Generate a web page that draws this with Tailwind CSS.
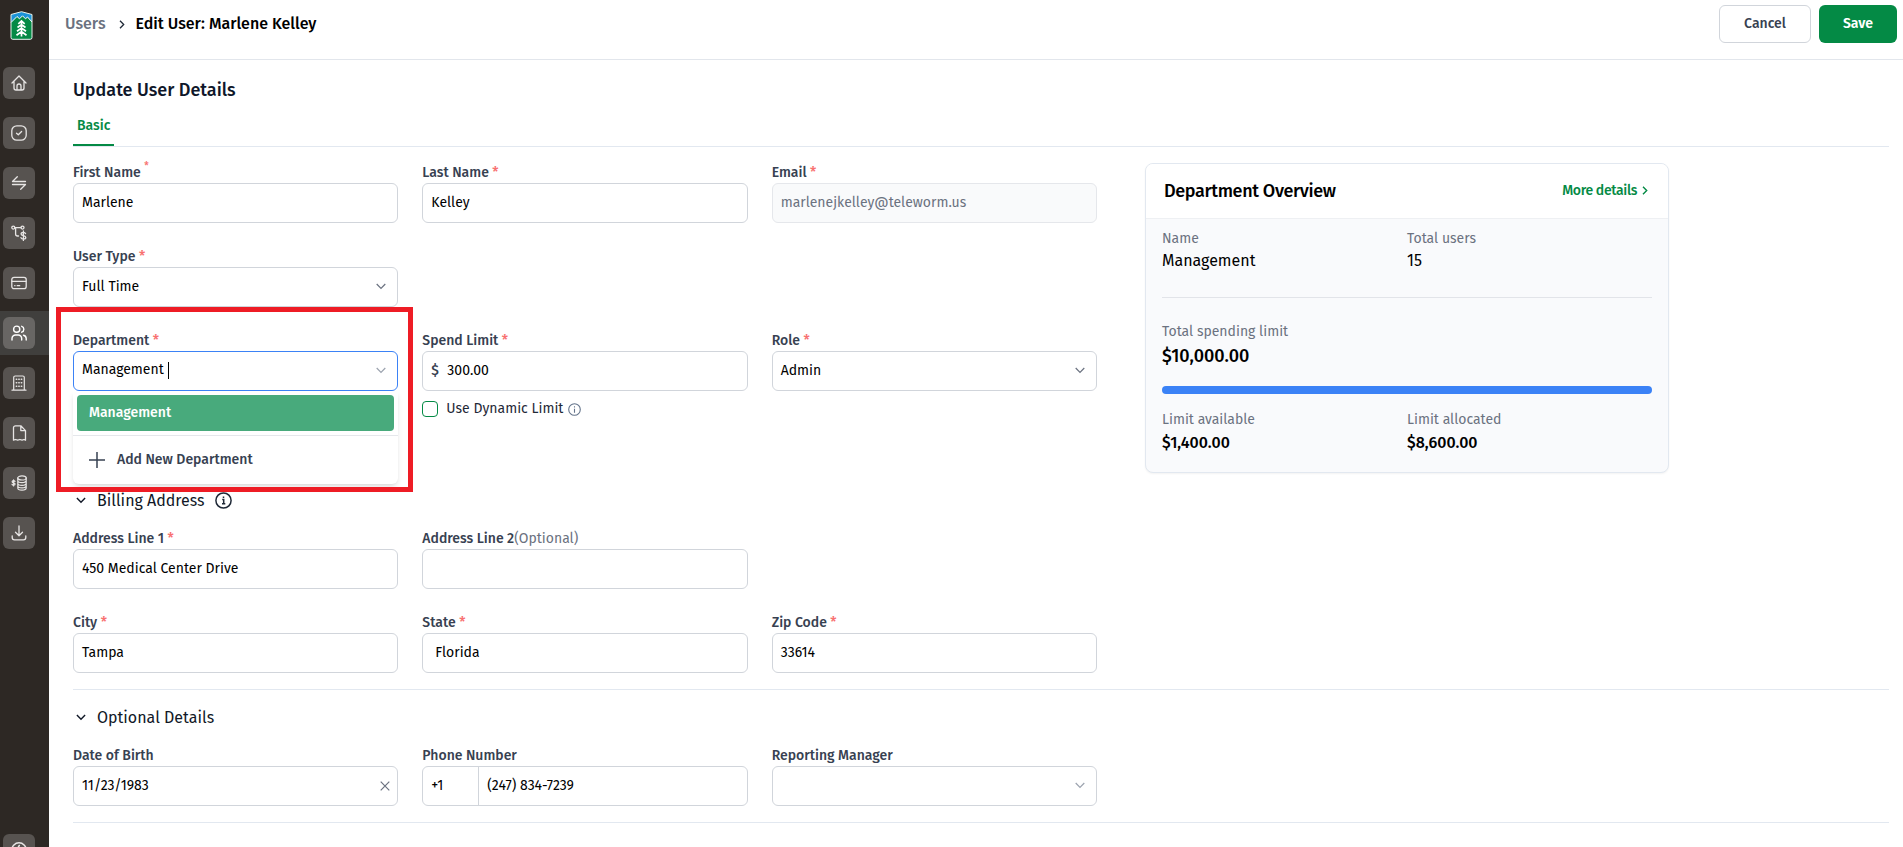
<!DOCTYPE html>
<html lang="en">
<head>
  <meta charset="UTF-8">
  <title>Edit User</title>
  <script src="https://cdn.jsdelivr.net/npm/@tailwindcss/browser@4"></script>
</head>
<body class="font-['Fira_Sans','Noto_Sans',sans-serif] bg-white text-black h-[847px] overflow-hidden flex text-sm">

  <!-- Sidebar -->
  <aside class="w-[49px] shrink-0 h-full bg-[#2d2824] text-[#e7e5e4] flex flex-col overflow-hidden">
    <div class="h-[61px] shrink-0 pl-[10px] pt-[11px]">
      <svg class="w-[23px] h-[29px]" viewBox="0 0 23 29">
        <path d="M1 3.500 11.500.7 22 3.500v23a1.800 1.800 0 0 1-1.800 1.800H2.800A1.800 1.800 0 0 1 1 26.500z" fill="#1b93d8"/>
        <path d="M1 11.500 7 5.500l2.500 2.300L12.500 4.800l3 3L17.500 6l4.500 5v15.500a1.800 1.800 0 0 1-1.800 1.800H2.800A1.800 1.800 0 0 1 1 26.500z" fill="#048a45"/>
        <path d="M1 11.500 7 5.500l2.500 2.300L12.500 4.800l3 3L17.500 6l4.500 5" fill="none" stroke="#fff" stroke-width="1"/>
        <path d="M1 3.500 11.500.7 22 3.500v23a1.800 1.800 0 0 1-1.800 1.800H2.800A1.800 1.800 0 0 1 1 26.500z" fill="none" stroke="#e8f3ec" stroke-width="1"/>
        <path d="M11.500 10.500v15M8.300 12.800l3.200-2.800 3.200 2.800M7.500 16.500l4-3 4 3M7 20.300l4.500-3.300 4.500 3.300M6.500 24.200l5-3.700 5 3.700" fill="none" stroke="#fff" stroke-width="1.700"/>
      </svg>
    </div>
    <nav class="flex flex-col">
      <a class="h-[44px] mb-[6px] pl-[3px] flex items-center"><span class="w-8 h-8 rounded-md bg-[#575350] flex items-center justify-center">
        <svg class="w-4 h-4" viewBox="0 0 16 16" fill="none" stroke="currentColor" stroke-width="1.300" stroke-linejoin="round" stroke-linecap="round"><path d="M1 8 8 1l7 7M3 6.500V13a2 2 0 0 0 2 2h6a2 2 0 0 0 2-2V6.500M6 15v-4a2 2 0 0 1 4 0v4"/></svg>
      </span></a>
      <a class="h-[44px] mb-[6px] pl-[3px] flex items-center"><span class="w-8 h-8 rounded-md bg-[#575350] flex items-center justify-center">
        <svg class="w-4 h-4" viewBox="0 0 16 16" fill="none" stroke="currentColor" stroke-width="1.300" stroke-linejoin="round" stroke-linecap="round"><rect x=".8" y=".8" width="14.400" height="14.400" rx="5"/><path d="m5.500 8.200 1.800 1.600 3.300-3.300"/></svg>
      </span></a>
      <a class="h-[44px] mb-[6px] pl-[3px] flex items-center"><span class="w-8 h-8 rounded-md bg-[#575350] flex items-center justify-center">
        <svg class="w-4 h-4" viewBox="0 0 16 16" fill="none" stroke="currentColor" stroke-width="1.300" stroke-linejoin="round" stroke-linecap="round"><path d="M14.500 6.500h-13L6.300 1.800M1.500 9.500h13L9.700 14.200"/></svg>
      </span></a>
      <a class="h-[44px] mb-[6px] pl-[3px] flex items-center"><span class="w-8 h-8 rounded-md bg-[#575350] flex items-center justify-center">
        <svg class="w-4 h-4" viewBox="0 0 16 16" fill="none" stroke="currentColor" stroke-width="1.300" stroke-linecap="round"><circle cx="2.300" cy="2.600" r="1.500"/><circle cx="11.500" cy="2.600" r="1.500"/><path d="M3.800 2.600H10M4.600 2.600V9a2 2 0 0 0 2 2H7.500M14.500 8.600c-.3-.8-1.100-1.200-2.200-1.200-1.300 0-2.200.6-2.200 1.600 0 2.400 4.700 1 4.700 3.400 0 1-.9 1.600-2.300 1.600-1.300 0-2.200-.5-2.500-1.300M12.400 6v9.500"/></svg>
      </span></a>
      <a class="h-[44px] mb-[6px] pl-[3px] flex items-center"><span class="w-8 h-8 rounded-md bg-[#575350] flex items-center justify-center">
        <svg class="w-4 h-4" viewBox="0 0 16 16" fill="none" stroke="currentColor" stroke-width="1.300" stroke-linecap="round"><rect x=".8" y="2.300" width="14.400" height="11.400" rx="2.200"/><path d="M1 6.300h14M3.700 10.700h.3M6.200 10.700h2.500"/></svg>
      </span></a>
      <a class="h-[44px] mb-[6px] pl-[3px] flex items-center bg-[#403f3d]"><span class="w-8 h-8 rounded-md bg-[#686664] text-white flex items-center justify-center">
        <svg class="w-4 h-4" viewBox="0 0 16 16" fill="none" stroke="currentColor" stroke-width="1.400" stroke-linecap="round"><circle cx="5.700" cy="4.200" r="3.100"/><path d="M1 15v-1.500a3.500 3.500 0 0 1 3.500-3.500h2.700a3.500 3.500 0 0 1 3.500 3.500V15M10.700 1.300a3.100 3.100 0 0 1 0 5.900M12.500 10.200A3.500 3.500 0 0 1 15.200 13.500V15"/></svg>
      </span></a>
      <a class="h-[44px] mb-[6px] pl-[3px] flex items-center"><span class="w-8 h-8 rounded-md bg-[#575350] flex items-center justify-center">
        <svg class="w-4 h-4" viewBox="0 0 16 16" fill="none" stroke="currentColor" stroke-width="1.200" stroke-linecap="round"><path d="M1 15.200h14M2.700 15V2.500A1.500 1.500 0 0 1 4.200 1h7.600a1.500 1.500 0 0 1 1.500 1.500V15"/><path d="M5.300 4.300h.4M7.800 4.300h.4M10.300 4.300h.4M5.300 7.800h.4M7.800 7.800h.4M10.300 7.800h.4M5.300 11.300h.4M7.800 11.300h.4M10.300 11.300h.4" stroke-width="1.500"/></svg>
      </span></a>
      <a class="h-[44px] mb-[6px] pl-[3px] flex items-center"><span class="w-8 h-8 rounded-md bg-[#575350] flex items-center justify-center">
        <svg class="w-4 h-4" viewBox="0 0 16 16" fill="none" stroke="currentColor" stroke-width="1.300" stroke-linejoin="round"><path d="M9.800.8H4.500a2 2 0 0 0-2 2v12.400l2-.7 2.200.7 2.200-.7 2.200.7 1.900-.7 1.500.7V5.600zM9.800.8v4.800h4.700"/></svg>
      </span></a>
      <a class="h-[44px] mb-[6px] pl-[3px] flex items-center"><span class="w-8 h-8 rounded-md bg-[#575350] flex items-center justify-center">
        <svg class="w-4 h-4" viewBox="0 0 16 16" fill="none" stroke="currentColor" stroke-width="1.200" stroke-linecap="round"><ellipse cx="11" cy="2.900" rx="4.200" ry="2.100"/><path d="M6.800 2.900v10.200c0 1.200 1.900 2.100 4.200 2.100s4.200-.9 4.200-2.100V2.900M6.800 5.600c0 1.200 1.900 2.100 4.200 2.100s4.200-.9 4.200-2.100M6.800 8.200c0 1.200 1.900 2.100 4.200 2.100s4.200-.9 4.200-2.100M6.800 10.700c0 1.200 1.900 2.100 4.200 2.100s4.200-.9 4.200-2.100M4 6.400c-.3-.5-.8-.7-1.500-.7-.8 0-1.400.4-1.400 1 0 1.500 3 .8 3 2.300 0 .7-.6 1.100-1.500 1.100-.8 0-1.400-.3-1.600-.9M2.600 4.900v6"/></svg>
      </span></a>
      <a class="h-[44px] pl-[3px] flex items-center"><span class="w-8 h-8 rounded-md bg-[#575350] flex items-center justify-center">
        <svg class="w-4 h-4" viewBox="0 0 16 16" fill="none" stroke="currentColor" stroke-width="1.300" stroke-linecap="round" stroke-linejoin="round"><path d="M8 1v9.500M4.500 7.300 8 10.700l3.500-3.400M1.200 10.800v1.700a2.300 2.300 0 0 0 2.300 2.300h9a2.300 2.300 0 0 0 2.300-2.300v-1.700"/></svg>
      </span></a>
    </nav>
    <a class="mt-[279px] pl-[3px] shrink-0"><span class="w-8 h-8 rounded-md bg-[#575350] flex items-center justify-center">
      <svg class="w-4 h-4" viewBox="0 0 16 16" fill="none" stroke="currentColor" stroke-width="1.500" stroke-linecap="round"><circle cx="8" cy="8" r="7.200"/><path d="M8.300 3.500 5.500 8h2.800v4"/></svg>
    </span></a>
  </aside>

  <main class="flex-1 min-w-0">
    <!-- Top bar -->
    <header class="h-[60px] border-b border-[#e2e6ec] flex items-start justify-between pl-4 pr-[6px] pt-[5px]">
      <div class="h-[38px] flex items-center text-base font-medium">
        <span class="text-[#6b7280]">Users</span>
        <svg class="w-[6px] h-[9px] ml-[13px] mr-[11px]" viewBox="0 0 6 9" fill="none" stroke="#1f2937" stroke-width="1.300"><path d="m1 .7 3.700 3.800L1 8.300"/></svg>
        <span>Edit User: Marlene Kelley</span>
      </div>
      <div class="flex gap-2 font-medium">
        <button class="w-[92px] h-[38px] rounded-md border border-[#d1d5db] text-[#374151]">Cancel</button>
        <button class="w-[78px] h-[38px] rounded-md bg-[#048a45] text-white font-semibold">Save</button>
      </div>
    </header>

    <div class="pl-6 pr-[14px]">
      <h1 class="pt-[18px] h-[51px] text-lg leading-6 font-medium text-[#0f172a]">Update User Details</h1>
      <div class="h-[36px] border-b border-[#e2e8f0]">
        <div class="w-[41px] h-[35px] border-b-2 border-[#048a45] text-[#048a45] font-medium pl-1 pt-[5px]">Basic</div>
      </div>

      <div class="flex">
        <div class="w-[1024px] shrink-0">
          <div class="grid grid-cols-3 gap-x-6 gap-y-[21px] pt-[13px]">
            <div>
              <label class="block h-[23px] pt-[3px] font-medium text-[#374151]">First Name <sup class="text-[10px] text-[#f87171] -top-2">*</sup></label>
              <div class="h-10 rounded-md border border-[#d1d5db] px-2 pt-[9px]">Marlene</div>
            </div>
            <div>
              <label class="block h-[23px] pt-[3px] font-medium text-[#374151]">Last Name <span class="text-[#f87171]">*</span></label>
              <div class="h-10 rounded-md border border-[#d1d5db] px-2 pt-[9px]">Kelley</div>
            </div>
            <div>
              <label class="block h-[23px] pt-[3px] font-medium text-[#374151]">Email <span class="text-[#f87171]">*</span></label>
              <div class="h-10 rounded-md border border-[#e5e7eb] bg-[#f9fafb] text-[#6b7280] px-2 pt-[9px]">marlenejkelley@teleworm.us</div>
            </div>

            <div class="col-span-3 w-[325.33px]">
              <label class="block h-[23px] pt-[3px] font-medium text-[#374151]">User Type <span class="text-[#f87171]">*</span></label>
              <div class="h-10 rounded-md border border-[#d1d5db] pl-2 pr-[11px] flex items-center justify-between"><span>Full Time</span>
                <svg class="w-[10px] h-[7px] mb-[2px]" viewBox="0 0 10 7" fill="none" stroke="#6b7280" stroke-width="1.200"><path d="m.7 1 4.300 4.500L9.300 1"/></svg>
              </div>
            </div>

            <div class="relative">
              <label class="block h-[23px] pt-[3px] font-medium text-[#374151]">Department <span class="text-[#f87171]">*</span></label>
              <div class="h-10 rounded-md border border-[#3b82f6] pl-2 pr-[11px] flex items-center justify-between">
                <span class="flex items-center"><span class="pb-[3px]">Management</span><span class="w-px h-[17px] bg-black ml-1 mb-[2px]"></span></span>
                <svg class="w-[10px] h-[7px] mb-[2px]" viewBox="0 0 10 7" fill="none" stroke="#9ca3af" stroke-width="1.200"><path d="m.7 1 4.300 4.500L9.300 1"/></svg>
              </div>
              <!-- Department menu -->
              <div class="absolute z-10 left-0 top-[63px] w-full h-[93px] rounded-b-md bg-white shadow-md pt-1">
                <div class="mx-1 h-9 rounded bg-[#48aa7c] text-white font-medium pl-3 pt-2">Management</div>
                <div class="mt-1 h-[49px] border-t border-[#e5e7eb] flex items-center pl-4 font-medium text-[#374151]">
                  <svg class="w-4 h-4 mr-3" viewBox="0 0 16 16" stroke="currentColor" stroke-width="1.500"><path d="M8 0v16M0 8h16"/></svg>
                  <span>Add New Department</span>
                </div>
              </div>
              <div class="absolute z-20 -left-[17px] -top-[21px] w-[357px] h-[185px] border-[5px] border-[#ee1c25]"></div>
            </div>
            <div>
              <label class="block h-[23px] pt-[3px] font-medium text-[#374151]">Spend Limit <span class="text-[#f87171]">*</span></label>
              <div class="h-10 rounded-md border border-[#d1d5db] px-2 pt-[9px] flex"><span class="w-4 font-medium text-[#374151]">$</span><span>300.00</span></div>
              <div class="flex items-center h-9 text-[#1f2937]">
                <span class="w-4 h-4 rounded border border-[#048a45] mr-2"></span>
                <span>Use Dynamic Limit</span>
                <svg class="w-[13px] h-[13px] ml-[5px]" viewBox="0 0 13 13" fill="none" stroke="#64748b" stroke-width="1.100"><circle cx="6.500" cy="6.500" r="5.800"/><path d="M6.500 5.700v4M6.500 3.300v1.200"/></svg>
              </div>
            </div>
            <div>
              <label class="block h-[23px] pt-[3px] font-medium text-[#374151]">Role <span class="text-[#f87171]">*</span></label>
              <div class="h-10 rounded-md border border-[#d1d5db] pl-2 pr-[11px] flex items-center justify-between"><span>Admin</span>
                <svg class="w-[10px] h-[7px] mb-[2px]" viewBox="0 0 10 7" fill="none" stroke="#6b7280" stroke-width="1.200"><path d="m.7 1 4.300 4.500L9.300 1"/></svg>
              </div>
            </div>
          </div>

          <!-- Billing address -->
          <div class="flex items-center h-6 mt-[61px] pl-[3px] text-base text-[#111827]">
            <svg class="w-[10px] h-[7px]" viewBox="0 0 10 7" fill="none" stroke="currentColor" stroke-width="1.400"><path d="m.9 1 4.100 4.300L9.100 1"/></svg>
            <span class="ml-[11px] pt-px">Billing Address</span>
            <svg class="w-[17px] h-[17px] ml-[10px]" viewBox="0 0 17 17" fill="none" stroke="#1f2937" stroke-width="1.500"><circle cx="8.500" cy="8.500" r="7.600"/><path d="M7.200 7.500h1.500v4.200M7 11.800h3.300M8.500 4.500v1.600"/></svg>
          </div>
          <div class="grid grid-cols-3 gap-x-6 gap-y-[21px] mt-[14px]">
            <div>
              <label class="block h-[23px] pt-[3px] font-medium text-[#374151]">Address Line 1 <span class="text-[#f87171]">*</span></label>
              <div class="h-10 rounded-md border border-[#d1d5db] px-2 pt-[9px]">450 Medical Center Drive</div>
            </div>
            <div class="col-span-2 w-[325.33px]">
              <label class="block h-[23px] pt-[3px] font-medium text-[#374151]">Address Line 2<span class="font-normal text-[#6b7280]">(Optional)</span></label>
              <div class="h-10 rounded-md border border-[#d1d5db]"></div>
            </div>
            <div>
              <label class="block h-[23px] pt-[3px] font-medium text-[#374151]">City <span class="text-[#f87171]">*</span></label>
              <div class="h-10 rounded-md border border-[#d1d5db] px-2 pt-[9px]">Tampa</div>
            </div>
            <div>
              <label class="block h-[23px] pt-[3px] font-medium text-[#374151]">State <span class="text-[#f87171]">*</span></label>
              <div class="h-10 rounded-md border border-[#d1d5db] px-3 pt-[9px]">Florida</div>
            </div>
            <div>
              <label class="block h-[23px] pt-[3px] font-medium text-[#374151]">Zip Code <span class="text-[#f87171]">*</span></label>
              <div class="h-10 rounded-md border border-[#d1d5db] px-2 pt-[9px]">33614</div>
            </div>
          </div>
        </div>

        <!-- Department overview -->
        <section class="ml-12 mt-4 w-[524px] h-[310px] shrink-0 rounded-lg border border-[#e2e8f0] bg-[#f9fafc] shadow-xs overflow-hidden">
          <div class="h-[55px] bg-white border-b border-[#eef0f3] flex items-center justify-between pl-[18px] pr-5 pb-px tracking-tight">
            <h2 class="text-lg font-medium">Department Overview</h2>
            <a class="flex items-center font-medium text-[#048a45]">More details
              <svg class="w-[6px] h-[9px] ml-[5px]" viewBox="0 0 6 9" fill="none" stroke="currentColor" stroke-width="1.400"><path d="m1 .7 3.700 3.800L1 8.300"/></svg>
            </a>
          </div>
          <div class="px-4">
            <div class="grid grid-cols-2 pt-[10px] h-[79px] border-b border-[#e2e4e9] content-start">
              <span class="text-[#6b7280]">Name</span><span class="text-[#6b7280]">Total users</span>
              <span class="text-base leading-6">Management</span><span class="text-base leading-6">15</span>
            </div>
            <div class="pt-6 h-[88px]">
              <p class="text-[#6b7280]">Total spending limit</p>
              <p class="text-lg leading-[29px] font-medium">$10,000.00</p>
            </div>
            <div class="h-2 rounded-full bg-[#3b82f6]"></div>
            <div class="grid grid-cols-2 pt-4">
              <span class="text-[#6b7280]">Limit available</span><span class="text-[#6b7280]">Limit allocated</span>
              <span class="text-base leading-[25px] font-medium">$1,400.00</span><span class="text-base leading-[25px] font-medium">$8,600.00</span>
            </div>
          </div>
        </section>
      </div>

      <!-- Optional details -->
      <div class="mt-4 border-t border-[#e2e8f0] h-[134px] border-b">
        <div class="flex items-center h-6 mt-[15px] pl-[3px] text-base text-[#111827]">
          <svg class="w-[10px] h-[7px]" viewBox="0 0 10 7" fill="none" stroke="currentColor" stroke-width="1.400"><path d="m.9 1 4.100 4.300L9.100 1"/></svg>
          <span class="ml-[11px] pt-px">Optional Details</span>
        </div>
        <div class="grid grid-cols-3 gap-x-6 mt-[14px] w-[1024px]">
          <div>
            <label class="block h-[23px] pt-[3px] font-medium text-[#374151]">Date of Birth</label>
            <div class="h-10 rounded-md border border-[#d1d5db] pl-2 pr-[7px] flex items-center justify-between"><span>11/23/1983</span>
              <svg class="w-[10px] h-[10px]" viewBox="0 0 10 10" stroke="#6b7280" stroke-width="1.200"><path d="m.7.7 8.600 8.600M9.300.7.7 9.300"/></svg>
            </div>
          </div>
          <div>
            <label class="block h-[23px] pt-[3px] font-medium text-[#374151]">Phone Number</label>
            <div class="h-10 rounded-md border border-[#d1d5db] flex">
              <span class="w-14 border-r border-[#d1d5db] px-2 pt-[9px]">+1</span><span class="px-2 pt-[9px]">(247) 834-7239</span>
            </div>
          </div>
          <div>
            <label class="block h-[23px] pt-[3px] font-medium text-[#374151]">Reporting Manager</label>
            <div class="h-10 rounded-md border border-[#d1d5db] pr-[11px] flex items-center justify-end">
              <svg class="w-[10px] h-[7px] mb-[2px]" viewBox="0 0 10 7" fill="none" stroke="#9ca3af" stroke-width="1.200"><path d="m.7 1 4.300 4.500L9.300 1"/></svg>
            </div>
          </div>
        </div>
      </div>
    </div>
  </main>

</body>
</html>
